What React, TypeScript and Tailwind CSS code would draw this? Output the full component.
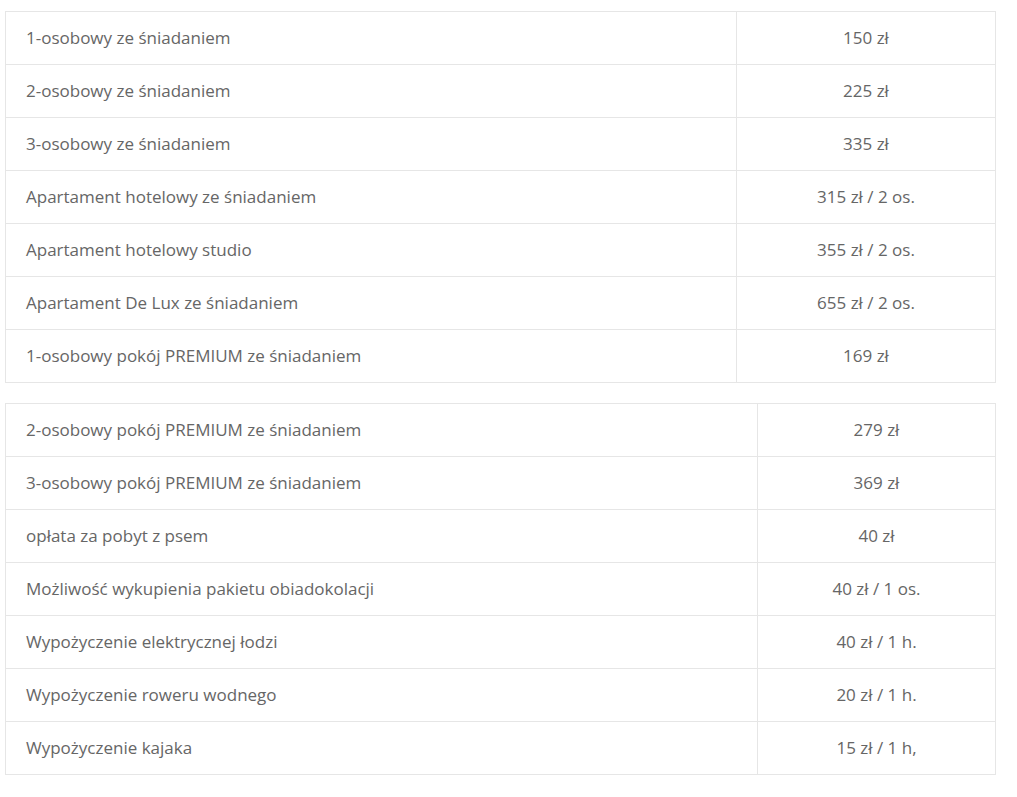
const firstTable: [string, string][] = [
  ['1-osobowy ze śniadaniem', '150 zł'],
  ['2-osobowy ze śniadaniem', '225 zł'],
  ['3-osobowy ze śniadaniem', '335 zł'],
  ['Apartament hotelowy ze śniadaniem', '315 zł / 2 os.'],
  ['Apartament hotelowy studio', '355 zł / 2 os.'],
  ['Apartament De Lux ze śniadaniem', '655 zł / 2 os.'],
  ['1-osobowy pokój PREMIUM ze śniadaniem', '169 zł'],
];

const secondTable: [string, string][] = [
  ['2-osobowy pokój PREMIUM ze śniadaniem', '279 zł'],
  ['3-osobowy pokój PREMIUM ze śniadaniem', '369 zł'],
  ['opłata za pobyt z psem', '40 zł'],
  ['Możliwość wykupienia pakietu obiadokolacji', '40 zł / 1 os.'],
  ['Wypożyczenie elektrycznej łodzi', '40 zł / 1 h.'],
  ['Wypożyczenie roweru wodnego', '20 zł / 1 h.'],
  ['Wypożyczenie kajaka', '15 zł / 1 h,'],
];

const PriceTable: React.FC<{ rows: [string, string][]; leftWidth: string }> = ({ rows, leftWidth }) => {
  return (
    <table className="w-[991px] border-collapse table-fixed">
      <colgroup>
        <col className={leftWidth} />
        <col />
      </colgroup>
      <tbody>
        {rows.map(([name, price]) => (
          <tr key={name} className="h-[53px]">
            <td className="border border-[#e6e6e6] pl-5 pr-2 align-middle">{name}</td>
            <td className="border border-[#e6e6e6] px-2 text-center align-middle">{price}</td>
          </tr>
        ))}
      </tbody>
    </table>
  );
};

export default function App() {
  return (
    <div className="bg-white min-h-[797px] pl-[5px] pt-[11px] font-['Open_Sans',sans-serif] text-[17px] text-[#666666]">
      <div className="flex flex-col gap-5">
        <PriceTable rows={firstTable} leftWidth="w-[731px]" />
        <PriceTable rows={secondTable} leftWidth="w-[752px]" />
      </div>
    </div>
  );
}
